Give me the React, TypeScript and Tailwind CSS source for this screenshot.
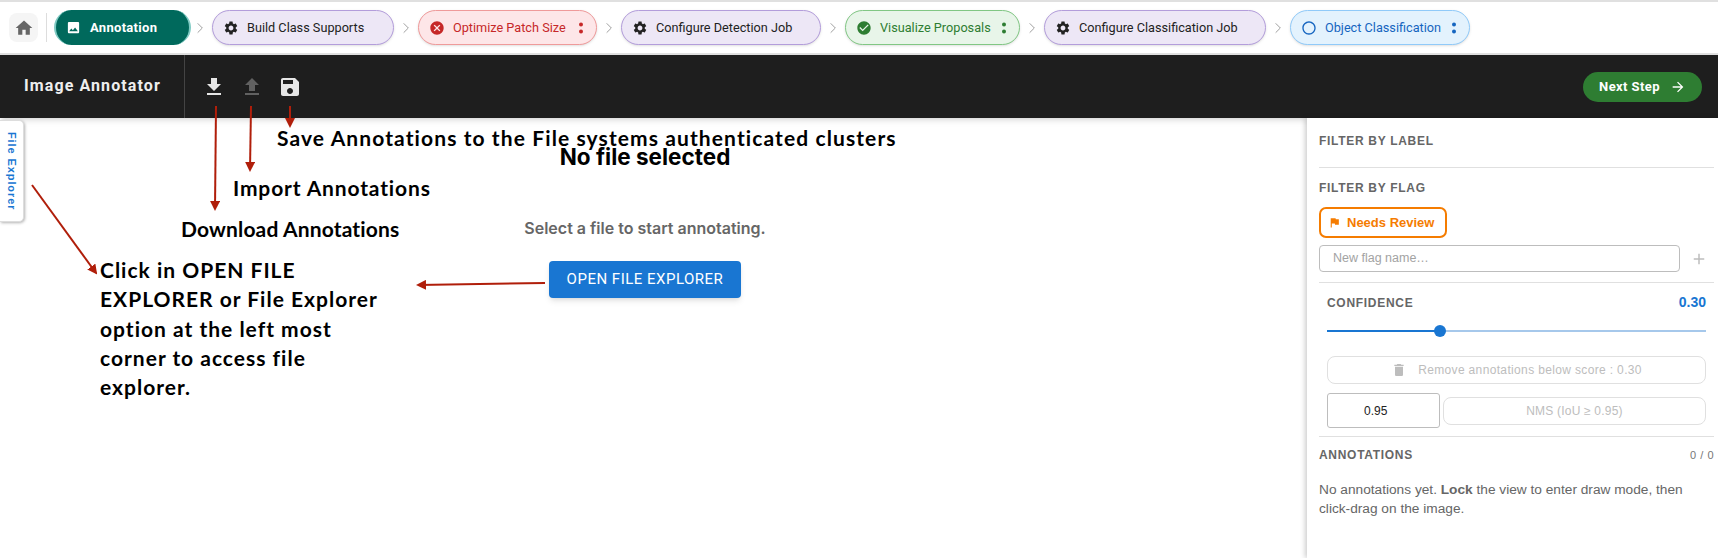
import React from "react";

const ICONS = {
  home: "M10 20v-6h4v6h5v-8h3L12 3 2 12h3v8z",
  image: "M21 19V5c0-1.1-.9-2-2-2H5c-1.1 0-2 .9-2 2v14c0 1.1.9 2 2 2h14c1.1 0 2-.9 2-2M8.5 13.5l2.5 3.01L14.5 12l4.5 6H5z",
  gear: "M19.14 12.94c.04-.3.06-.61.06-.94 0-.32-.02-.64-.07-.94l2.03-1.58c.18-.14.23-.41.12-.61l-1.92-3.32c-.12-.22-.37-.29-.59-.22l-2.39.96c-.5-.38-1.03-.7-1.62-.94l-.36-2.54c-.04-.24-.24-.41-.48-.41h-3.84c-.24 0-.43.17-.47.41l-.36 2.54c-.59.24-1.13.57-1.62.94l-2.39-.96c-.22-.08-.47 0-.59.22L2.74 8.87c-.12.21-.08.47.12.61l2.03 1.58c-.05.3-.09.63-.09.94s.02.64.07.94l-2.03 1.58c-.18.14-.23.41-.12.61l1.92 3.32c.12.22.37.29.59.22l2.39-.96c.5.38 1.03.7 1.62.94l.36 2.54c.05.24.24.41.48.41h3.84c.24 0 .44-.17.47-.41l.36-2.54c.59-.24 1.13-.56 1.62-.94l2.39.96c.22.08.47 0 .59-.22l1.92-3.32c.12-.22.07-.47-.12-.61zM12 15.6c-1.98 0-3.6-1.62-3.6-3.6s1.62-3.6 3.6-3.6 3.6 1.62 3.6 3.6-1.62 3.6-3.6 3.6",
  cancel: "M12 2C6.47 2 2 6.47 2 12s4.47 10 10 10 10-4.47 10-10S17.53 2 12 2m5 13.59L15.59 17 12 13.41 8.41 17 7 15.59 10.59 12 7 8.41 8.41 7 12 10.59 15.59 7 17 8.41 13.41 12z",
  check: "M12 2C6.48 2 2 6.48 2 12s4.48 10 10 10 10-4.48 10-10S17.52 2 12 2m-2 15-5-5 1.41-1.41L10 14.17l7.59-7.59L19 8z",
  circle: "M12 2C6.48 2 2 6.48 2 12s4.48 10 10 10 10-4.48 10-10S17.52 2 12 2m0 18c-4.42 0-8-3.58-8-8s3.58-8 8-8 8 3.58 8 8-3.58 8-8 8",
  download: "M5 20h14v-2H5zM19 9h-4V3H9v6H5l7 7z",
  upload: "M5 20h14v-2H5zm0-10h4v6h6v-6h4l-7-7z",
  save: "M17 3H5c-1.11 0-2 .9-2 2v14c0 1.1.89 2 2 2h14c1.1 0 2-.9 2-2V7zm-5 16c-1.66 0-3-1.34-3-3s1.34-3 3-3 3 1.34 3 3-1.34 3-3 3m3-10H5V5h10z",
  trash: "M6 19c0 1.1.9 2 2 2h8c1.1 0 2-.9 2-2V7H6zM19 4h-3.5l-1-1h-5l-1 1H5v2h14z",
  flag: "M14.4 6 14 4H5v17h2v-7h5.6l.4 2h7V6z",
  arrow: "m12 4-1.41 1.41L16.17 11H4v2h12.17l-5.58 5.59L12 20l8-8z",
  plus: "M19 13h-6v6h-2v-6H5v-2h6V5h2v6h6z",
};

const Icon = ({ d, className }: { d: string; className: string }) => (
  <svg viewBox="0 0 24 24" fill="currentColor" className={className}>
    <path d={d} />
  </svg>
);

const Dots = () => (
  <svg viewBox="0 0 6 14" fill="currentColor" className="ml-auto mr-[2px] h-[14px] w-[6px] shrink-0">
    <circle cx="3" cy="3.5" r="2" />
    <circle cx="3" cy="10.5" r="2" />
  </svg>
);

const Chevron = () => (
  <svg viewBox="0 0 24 24" fill="none" stroke="#9e9e9e" strokeWidth="1.7" className="h-[24px] w-[24px] shrink-0 p-[5px]">
    <path d="m8 4 8 8-8 8" />
  </svg>
);

const steps = [
  { label: "Build Class Supports", icon: ICONS.gear, width: "w-[182px]", box: "bg-[#ede7f6] border-[#b39ddb] text-[#222]", iconColor: "text-[#222]", menu: false },
  { label: "Optimize Patch Size", icon: ICONS.cancel, width: "w-[179px]", box: "bg-[#fde6e8] border-[#ef9a9a] text-[#c62828]", iconColor: "text-[#c62828]", menu: true },
  { label: "Configure Detection Job", icon: ICONS.gear, width: "w-[200px]", box: "bg-[#ede7f6] border-[#b39ddb] text-[#222]", iconColor: "text-[#222]", menu: false },
  { label: "Visualize Proposals", icon: ICONS.check, width: "w-[175px]", box: "bg-[#e8f5e9] border-[#81c784] text-[#2e7d32]", iconColor: "text-[#2e7d32]", menu: true },
  { label: "Configure Classification Job", icon: ICONS.gear, width: "w-[222px]", box: "bg-[#ede7f6] border-[#b39ddb] text-[#222]", iconColor: "text-[#222]", menu: false },
  { label: "Object Classification", icon: ICONS.circle, width: "w-[180px]", box: "bg-[#e3f2fd] border-[#90caf9] text-[#1565c0]", iconColor: "text-[#1565c0]", menu: true },
];

const heading = "text-[12px] font-bold tracking-[0.7px] text-[#666]";

function StepBar() {
  return (
    <div className="flex h-[55px] items-center border-t-2 border-b-2 border-[#e0e0e0] bg-white pl-[9px] font-['Roboto',sans-serif]">
      <button className="flex h-[29px] w-[29px] items-center justify-center rounded-lg bg-[#f5f5f5] text-[#666]">
        <Icon d={ICONS.home} className="h-[20px] w-[20px]" />
      </button>
      <div className="ml-[8px] mr-[7px] h-[29px] w-px bg-[#ddd]" />
      <div className="-mr-[3px] flex h-[35px] w-[137px] items-center gap-[9px] rounded-full border-x-2 border-[#80cbc4] bg-[#00695c] pl-[10px] text-[13px] font-bold tracking-[0.3px] text-white">
        <Icon d={ICONS.image} className="h-[15px] w-[15px]" />
        Annotation
      </div>
      {steps.map((s) => (
        <React.Fragment key={s.label}>
          <Chevron />
          <div className={`flex h-[35px] items-center rounded-full border px-[10px] text-[12.7px] shadow-sm ${s.width} ${s.box}`}>
            <Icon d={s.icon} className={`mr-[8px] h-[16px] w-[16px] shrink-0 ${s.iconColor}`} />
            <span className="whitespace-nowrap">{s.label}</span>
            {s.menu && <Dots />}
          </div>
        </React.Fragment>
      ))}
    </div>
  );
}

function Toolbar() {
  return (
    <div className="flex h-[63px] items-center bg-[#1e1e1e] font-['Roboto',sans-serif] shadow-md">
      <div className="flex h-full w-[185px] items-center border-r border-[#444] pb-[2px] pl-[24px] text-[16px] font-bold tracking-[1.1px] text-[#eee]">
        Image Annotator
      </div>
      <div className="ml-[17px] flex items-center gap-[14px]">
        <Icon d={ICONS.download} className="h-[24px] w-[24px] text-[#e6e6e6]" />
        <Icon d={ICONS.upload} className="h-[24px] w-[24px] text-[#616161]" />
        <Icon d={ICONS.save} className="h-[24px] w-[24px] text-[#e6e6e6]" />
      </div>
      <button className="ml-auto mr-[16px] flex h-[30px] w-[119px] items-center justify-center gap-[10px] rounded-full bg-[#2e7d32] text-[13px] font-bold tracking-[0.4px] text-white">
        Next Step
        <Icon d={ICONS.arrow} className="h-[16px] w-[16px]" />
      </button>
    </div>
  );
}

function SidePanel() {
  return (
    <aside className="z-10 flex w-[411px] shrink-0 flex-col bg-white pl-[12px] pr-[4px] font-['Liberation_Sans',sans-serif] shadow-[-2px_0_5px_rgba(0,0,0,0.2)]">
      <div className="flex h-[50px] items-start border-b border-[#e0e0e0] pt-[14px]">
        <span className={heading}>FILTER BY LABEL</span>
      </div>
      <div className="border-b border-[#e0e0e0] pb-[10px]">
        <div className={`${heading} mt-[11px]`}>FILTER BY FLAG</div>
        <div className="mt-[10px] flex h-[31px] w-[128px] items-center gap-[6px] rounded-[7px] border-2 border-[#f57c00] pl-[7px] text-[13px] font-bold text-[#f57c00]">
          <Icon d={ICONS.flag} className="h-[13px] w-[13px]" />
          Needs Review
        </div>
        <div className="mt-[7px] flex items-center">
          <div className="flex h-[27px] w-[361px] items-center rounded-[4px] border border-[#bdbdbd] pl-[13px] text-[12.5px] text-[#a3a3a3]">
            New flag name…
          </div>
          <Icon d={ICONS.plus} className="ml-[10px] h-[18px] w-[18px] text-[#bdbdbd]" />
        </div>
      </div>
      <div className="border-b border-[#e0e0e0] pb-[8px] pl-[8px] pr-[8px]">
        <div className="mt-[9px] flex items-center justify-between">
          <span className={heading}>CONFIDENCE</span>
          <span className="text-[14px] font-bold text-[#1976d2]">0.30</span>
        </div>
        <div className="relative mt-[17px] h-[2px] bg-[#a6c8eb]">
          <div className="h-full w-[113px] bg-[#1976d2]" />
          <div className="absolute left-[107px] top-[-5px] h-[12px] w-[12px] rounded-full bg-[#1976d2]" />
        </div>
        <div className="mt-[24px] flex h-[28px] items-center justify-center gap-[11px] rounded-[8px] border border-[#e0e0e0] text-[12px] tracking-[0.35px] text-[#bdbdbd]">
          <Icon d={ICONS.trash} className="h-[16px] w-[16px] text-[#bdbdbd]" />
          Remove annotations below score : 0.30
        </div>
        <div className="mt-[9px] flex items-center gap-[3px]">
          <div className="flex h-[35px] w-[113px] shrink-0 items-center rounded-[3px] border border-[#bdbdbd] pl-[36px] text-[12px] text-[#222]">
            0.95
          </div>
          <div className="flex h-[28px] flex-1 items-center justify-center rounded-[8px] border border-[#e0e0e0] text-[12px] tracking-[0.2px] text-[#bdbdbd]">
            NMS (IoU ≥ 0.95)
          </div>
        </div>
      </div>
      <div className="mt-[9px] flex items-center justify-between">
        <span className={heading}>ANNOTATIONS</span>
        <span className="text-[11px] tracking-[0.5px] text-[#777]">0 / 0</span>
      </div>
      <p className="mt-[16px] pr-[20px] text-[13.7px] leading-[19px] text-[#666]">
        No annotations yet. <b>Lock</b> the view to enter draw mode, then click-drag on the image.
      </p>
    </aside>
  );
}

const note = "absolute whitespace-nowrap font-['Comic_Sans_MS','Lato',sans-serif] text-[21px] font-bold leading-[29.3px] text-black";

export default function App() {
  return (
    <div className="relative flex h-[558px] w-[1718px] flex-col overflow-hidden bg-white">
      <StepBar />
      <Toolbar />
      <div className="flex flex-1">
        <main className="relative flex-1 font-['Inter',sans-serif]">
          <div className="absolute left-0 top-[2px] flex h-[102px] w-[24px] items-center justify-center rounded-r-[5px] border border-l-0 border-[#ddd] bg-white shadow-[1px_1px_3px_rgba(0,0,0,0.3)]">
            <span className="whitespace-nowrap font-['Liberation_Sans',sans-serif] text-[11px] font-bold tracking-[0.9px] text-[#1976d2] [writing-mode:vertical-rl]">
              File Explorer
            </span>
          </div>
          <div className="flex flex-col items-center pr-[17px] pt-[24px]">
            <h2 className="text-[22.5px] font-bold leading-[30px] text-black">No file selected</h2>
            <p className="mt-[46px] text-[16px] font-semibold leading-[20px] text-[#666]">Select a file to start annotating.</p>
            <button className="mt-[23px] h-[37px] w-[192px] rounded-[4px] bg-[#1976d2] font-['Roboto',sans-serif] text-[15px] tracking-[0.5px] text-white shadow-md">
              OPEN FILE EXPLORER
            </button>
          </div>
        </main>
        <SidePanel />
      </div>

      {/* callouts drawn over the page */}
      <svg className="pointer-events-none absolute left-0 top-0 h-[558px] w-[1718px]" viewBox="0 0 1718 558" fill="none" stroke="#b01e0a" strokeWidth="2">
        <defs>
          <marker id="head" markerWidth="5" markerHeight="5" refX="4" refY="2.5" orient="auto">
            <path d="M0 0 5 2.5 0 5z" fill="#b01e0a" stroke="none" />
          </marker>
        </defs>
        <path d="M216 106 215 209" markerEnd="url(#head)" />
        <path d="M251 106 250 170" markerEnd="url(#head)" />
        <path d="M290 106 290 126" markerEnd="url(#head)" />
        <path d="M32 185 96 273" markerEnd="url(#head)" />
        <path d="M545 283 418 285" markerEnd="url(#head)" />
      </svg>
      <div className={`${note} left-[277px] top-[123px] tracking-[1.1px]`}>Save Annotations to the File systems authenticated clusters</div>
      <div className={`${note} left-[233px] top-[173px] tracking-[0.85px]`}>Import Annotations</div>
      <div className={`${note} left-[181px] top-[214px] tracking-[0.15px]`}>Download Annotations</div>
      <div className={`${note} left-[100px] top-[255px] tracking-[1px]`}>
        Click in OPEN FILE
        <br />
        EXPLORER or File Explorer
        <br />
        option at the left most
        <br />
        corner to access file
        <br />
        explorer.
      </div>
    </div>
  );
}
